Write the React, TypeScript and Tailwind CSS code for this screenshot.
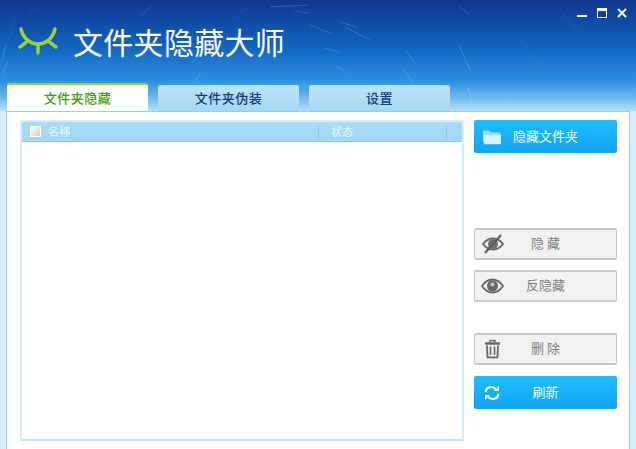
import React from "react";

const cjk = "font-['Noto_Sans_CJK_SC','Noto_Sans',sans-serif]";

const Streaks = () => (
  <svg className="absolute left-0 top-0 pointer-events-none" width="636" height="111" fill="none" stroke="#ffffff" strokeLinecap="round">
    <path d="M141 16L152 5M192 62L200 56M194 83L200 74M6 44L2 62M7 62L3 72" strokeOpacity="0.16" />
    <path d="M271 7L307 5M295 11L308 13M310 25L330 33M340 22L356 27M325 48L338 52" strokeOpacity="0.16" />
    <path d="M458 5L470 15M345 27L370 40M335 65L345 72" strokeOpacity="0.14" />
    <path d="M406 51L415 63M459 45L470 70M468 88L472 102M403 68L412 82" strokeOpacity="0.2" />
    <path d="M8 60L4 78M16 20L8 40M36 6L28 16M230 20L250 6M520 40L540 66M560 10L580 34M500 90L510 105" strokeOpacity="0.07" />
  </svg>
);

const Logo = () => (
  <svg width="40" height="32" viewBox="0 0 40 32" fill="none" strokeLinecap="round" className="shrink-0">
    <path d="M3 4C5 13 12 19 20 19C28 19 35 13 37 4" stroke="#9bd13a" strokeWidth="3.500" />
    <path d="M20 19V28M10 16L2 22M30 16L38 22" stroke="#9bd13a" strokeWidth="3.500" />
  </svg>
);

const WindowButtons = () => (
  <div className="absolute right-[9px] top-[7px] flex items-center gap-[10px]">
    <svg width="10" height="12" viewBox="0 0 10 12"><rect y="8" width="10" height="2" fill="#fff" /></svg>
    <svg width="10" height="10" viewBox="0 0 10 10"><rect x="0.5" y="0.5" width="9" height="9" fill="#123f96" stroke="#fff" /><rect width="10" height="3" fill="#fff" /></svg>
    <svg width="10" height="10" viewBox="0 0 10 10"><path d="M1 1L9 9M9 1L1 9" stroke="#fff" strokeWidth="2" /></svg>
  </div>
);

const FolderIcon = () => (
  <svg width="18" height="15" viewBox="0 0 18 15">
    <path d="M0 2Q0 1 1 1H6L8 3H16Q17 3 17 4V5H1V13H0Z" fill="#9fdcfa" />
    <path d="M1 5H18V14Q18 15 17 15H2Q1 15 1 14Z" fill="#d9f3fe" />
  </svg>
);

const EyeOffIcon = () => (
  <svg width="22" height="20" viewBox="0 0 22 20" fill="none">
    <path d="M1 10C4 6 8 4.500 11 4.500C14 4.500 18 6 21 10C18 14 14 15.500 11 15.500C8 15.500 4 14 1 10Z" stroke="#666666" strokeWidth="1.800" />
    <circle cx="11" cy="10" r="5" fill="#707070" />
    <path d="M3 19L19 1" stroke="#5f5f5f" strokeWidth="2.400" />
  </svg>
);

const EyeIcon = () => (
  <svg width="23" height="16" viewBox="0 0 23 16" fill="none">
    <path d="M1 8C4 3.500 8 1.500 11.500 1.500C15 1.500 19 3.500 22 8C19 12.500 15 14.500 11.500 14.500C8 14.500 4 12.500 1 8Z" stroke="#666666" strokeWidth="1.800" />
    <circle cx="11.500" cy="8" r="5.500" fill="#666666" />
    <circle cx="11.500" cy="6.500" r="2" fill="#c9c9c9" />
  </svg>
);

const TrashIcon = () => (
  <svg width="15" height="19" viewBox="0 0 15 19" fill="none" stroke="#666666">
    <path d="M5 3V1H10V3" strokeWidth="1.400" />
    <path d="M0 4H15" strokeWidth="2.400" />
    <path d="M2 6L2.500 18H12.500L13 6" strokeWidth="1.800" />
    <path d="M5.500 7V15.500M9.500 7V15.500" strokeWidth="1.600" />
  </svg>
);

const RefreshIcon = () => (
  <svg width="16" height="16" viewBox="0 0 16 16" fill="none" stroke="#fff" strokeWidth="2.200">
    <path d="M1.500 7C2 4 4.500 2 7.500 2C9.500 2 11 3 12 4.500" />
    <path d="M14.500 9C14 12 11.500 14 8.500 14C6.500 14 5 13 4 11.500" />
    <path d="M15 1V6H10Z" fill="#fff" stroke="none" />
    <path d="M1 15V10H6Z" fill="#fff" stroke="none" />
  </svg>
);

type ActionProps = {
  icon: React.ReactNode;
  label: string;
  blue?: boolean;
  className?: string;
};

const ActionButton = ({ icon, label, blue, className }: ActionProps) => (
  <div
    className={
      "relative flex w-[143px] items-center justify-center rounded-[2px] pb-[3px] text-[13px] leading-none " +
      (blue
        ? "h-[33px] bg-gradient-to-b from-[#1ebcff] to-[#12a3fb] text-white "
        : "h-[32px] border border-[#c6c8c8] border-t-2 border-b-2 bg-[#f0f1f1] text-[#808080] ") +
      (className ?? "")
    }
  >
    <span className="absolute left-[6px] top-1/2 flex w-[23px] -translate-y-1/2 justify-center">{icon}</span>
    <span>{label}</span>
  </div>
);

const Tab = ({ label, active }: { label: string; active?: boolean }) => (
  <div
    className={
      "flex w-[141px] items-center justify-center rounded-t-[3px] pb-[2px] font-medium text-[13px] leading-none tracking-[0.5px] " +
      (active
        ? "h-[28px] border-t-2 border-[#9bd52f] bg-white text-[#3f9e0a]"
        : "h-[26px] bg-gradient-to-b from-[#bfe3f6] to-[#a6d7f1] text-[#123a80]")
    }
  >
    {label}
  </div>
);

export default function App() {
  return (
    <div className={"relative flex h-[449px] w-[636px] flex-col overflow-hidden bg-[#d4eefa] " + cjk}>
      <div className="relative h-[111px] shrink-0 bg-[linear-gradient(to_bottom,#13368e_0%,#0f5fbb_38%,#2a8ee0_72%,#6db9ec_88%,#b8e0f6_100%)]">
        <Streaks />
        <WindowButtons />
        <div className="relative flex items-center gap-[15px] pl-[18px] pt-[21px]">
          <Logo />
          <span className="text-[30px] leading-[40px] tracking-[0.3px] text-white">文件夹隐藏大师</span>
        </div>
        <div className="absolute bottom-0 left-[7px] flex items-end gap-[10px]">
          <Tab label="文件夹隐藏" active />
          <Tab label="文件夹伪装" />
          <Tab label="设置" />
        </div>
      </div>

      <div className="ml-[6px] mr-[6px] flex min-h-0 flex-1 gap-[10px] border-l border-r border-t border-[#8fd0ee] bg-white pl-[13px] pr-[12px] pt-[8px]">
        <div className="mb-[8px] flex w-[444px] shrink-0 flex-col border-2 border-[#d8ecfa] border-b-[#c6e4f7]">
          <div className="flex h-[20px] items-center border-b border-[#8ccbf0] bg-gradient-to-b from-[#a9dcf9] to-[#a0d6f6] text-[11px] leading-none text-[#f0f8ff]">
            <span className="ml-[8px] h-[11px] w-[11px] border border-white bg-gradient-to-br from-white to-[#d0d0d0]" />
            <span className="ml-[7px] w-[270px]">名称</span>
            <span className="h-[14px] w-px bg-[#8fc8e8]" />
            <span className="ml-[12px] flex-1">状态</span>
            <span className="mr-[15px] h-[14px] w-px bg-[#8fc8e8]" />
          </div>
          <div className="flex-1 bg-white" />
        </div>

        <div className="flex flex-col">
          <ActionButton blue icon={<FolderIcon />} label="隐藏文件夹" />
          <ActionButton className="mt-[75px]" icon={<EyeOffIcon />} label="隐 藏" />
          <ActionButton className="mt-[10px]" icon={<EyeIcon />} label="反隐藏" />
          <ActionButton className="mt-[31px]" icon={<TrashIcon />} label="删 除" />
          <ActionButton blue className="mt-[11px]" icon={<RefreshIcon />} label="刷新" />
        </div>
      </div>
    </div>
  );
}
